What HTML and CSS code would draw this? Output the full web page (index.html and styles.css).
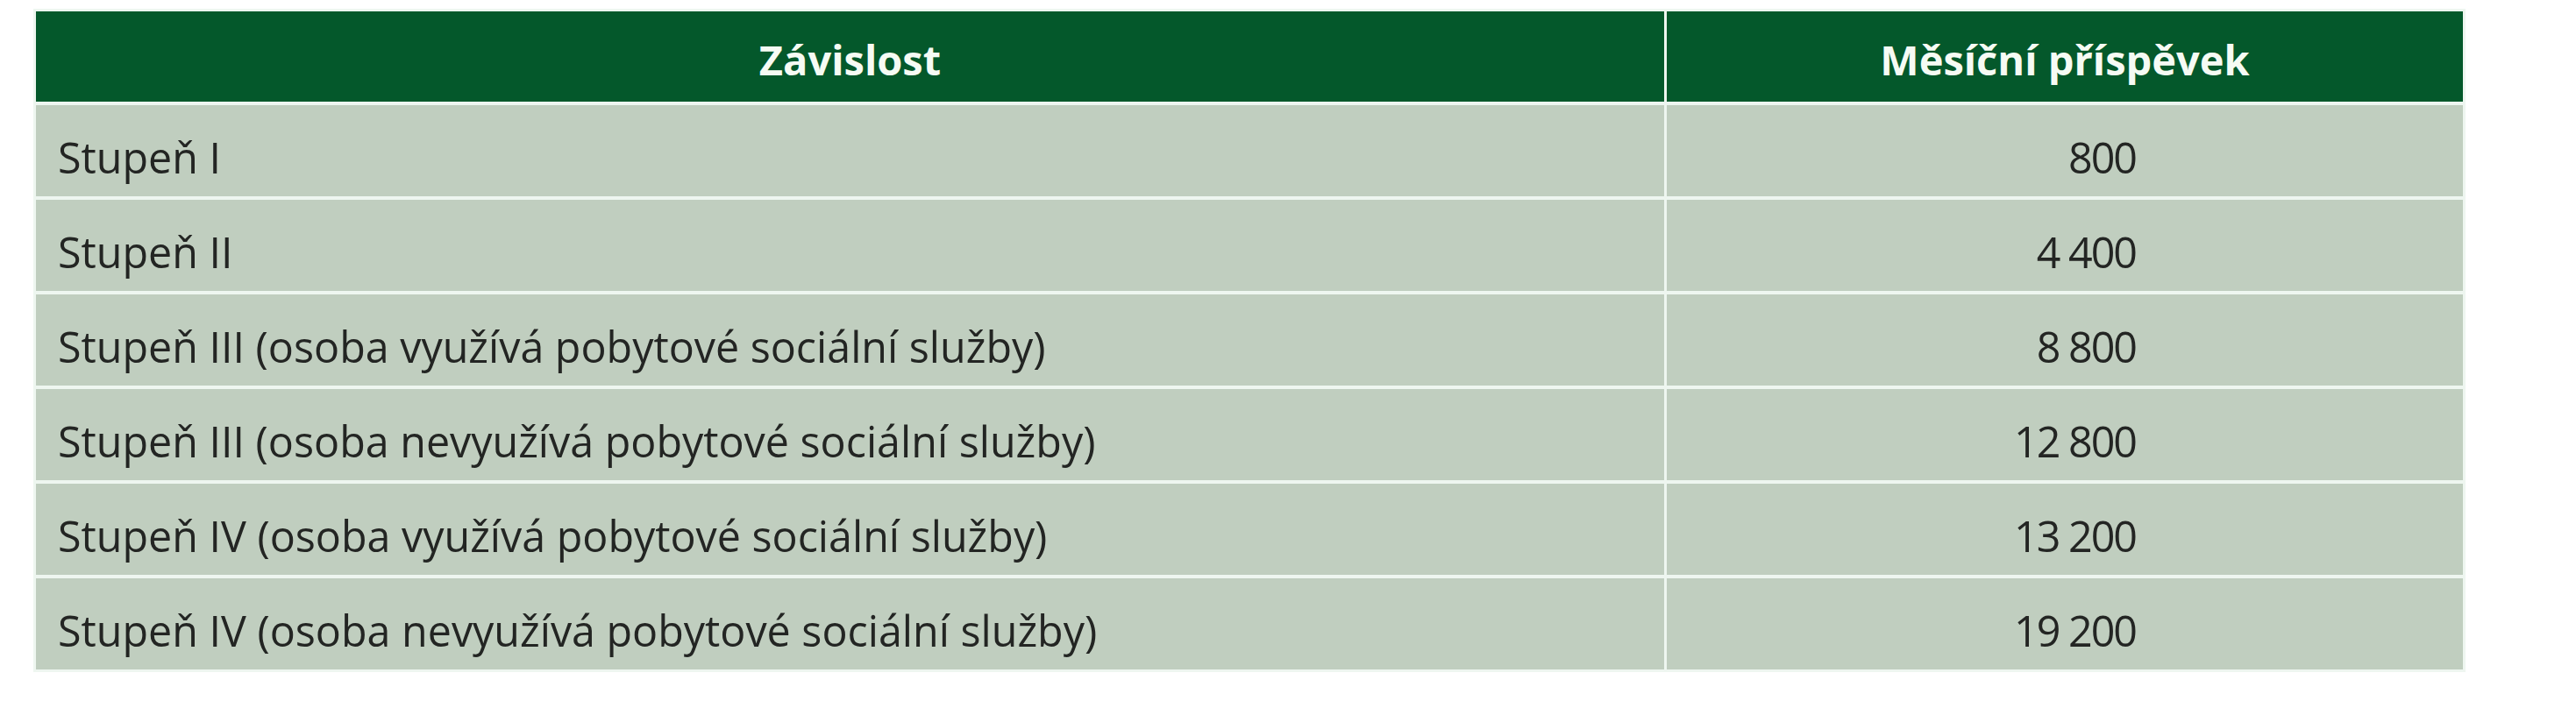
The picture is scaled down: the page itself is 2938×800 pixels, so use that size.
FILE: index.html
```html
<!DOCTYPE html>
<html lang="cs">
<head>
<meta charset="utf-8">
<title>Příspěvek na péči</title>
<link rel="stylesheet" href="styles.css">
</head>
<body>
<div class="table">
  <div class="cell head">Závislost</div>
  <div class="cell head">Měsíční příspěvek</div>

  <div class="cell label">Stupeň I</div>
  <div class="cell num">800</div>

  <div class="cell label">Stupeň II</div>
  <div class="cell num">4 400</div>

  <div class="cell label">Stupeň III (osoba využívá pobytové sociální služby)</div>
  <div class="cell num">8 800</div>

  <div class="cell label">Stupeň III (osoba nevyužívá pobytové sociální služby)</div>
  <div class="cell num">12 800</div>

  <div class="cell label">Stupeň IV (osoba využívá pobytové sociální služby)</div>
  <div class="cell num">13 200</div>

  <div class="cell label">Stupeň IV (osoba nevyužívá pobytové sociální služby)</div>
  <div class="cell num">19 200</div>
</div>
</body>
</html>
```
FILE: styles.css
```css
html, body {
  margin: 0;
  padding: 0;
  background: #ffffff;
}

body {
  font-family: "Open Sans", "Noto Sans", sans-serif;
  color: #232523;
}

.table {
  display: grid;
  grid-template-columns: 1857px 908px;
  grid-template-rows: 103px repeat(6, 104px);
  column-gap: 3px;
  row-gap: 4px;
  width: 2768px;
  margin: 10px 0 0 38px;
  padding: 3px;
  background: #eef6f0;
}

.cell {
  box-sizing: border-box;
  background: #c0cebf;
  font-size: 48.4px;
  line-height: 48px;
  padding-top: 35px;
  white-space: nowrap;
}

.head {
  background: #04582b;
  color: #f6fbf4;
  font-weight: 700;
  font-size: 47px;
  line-height: 47px;
  padding-top: 32px;
  text-align: center;
  letter-spacing: 0;
}

.label {
  padding-left: 25px;
}

.num {
  text-align: right;
  padding-right: 373px;
  letter-spacing: -2px;
}
```
